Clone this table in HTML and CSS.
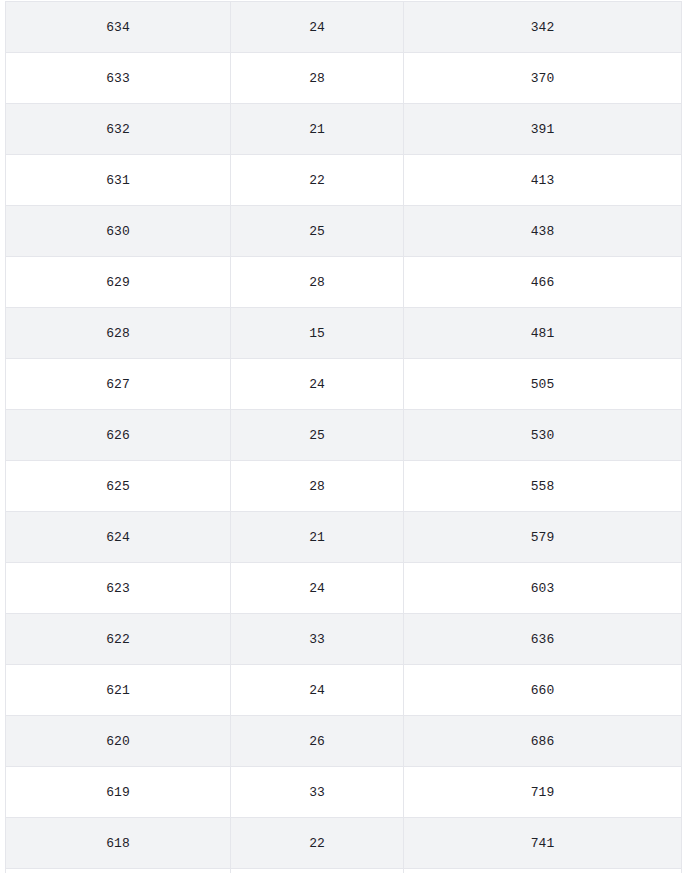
FILE: index.html
```html
<!DOCTYPE html>
<html>
<head>
<meta charset="utf-8">
<link rel="stylesheet" href="styles.css">
</head>
<body>
<div class="wrap">
<table class="data">
<colgroup><col class="c1"><col class="c2"><col class="c3"></colgroup>
<tbody>
<tr><td>634</td><td>24</td><td>342</td></tr>
<tr><td>633</td><td>28</td><td>370</td></tr>
<tr><td>632</td><td>21</td><td>391</td></tr>
<tr><td>631</td><td>22</td><td>413</td></tr>
<tr><td>630</td><td>25</td><td>438</td></tr>
<tr><td>629</td><td>28</td><td>466</td></tr>
<tr><td>628</td><td>15</td><td>481</td></tr>
<tr><td>627</td><td>24</td><td>505</td></tr>
<tr><td>626</td><td>25</td><td>530</td></tr>
<tr><td>625</td><td>28</td><td>558</td></tr>
<tr><td>624</td><td>21</td><td>579</td></tr>
<tr><td>623</td><td>24</td><td>603</td></tr>
<tr><td>622</td><td>33</td><td>636</td></tr>
<tr><td>621</td><td>24</td><td>660</td></tr>
<tr><td>620</td><td>26</td><td>686</td></tr>
<tr><td>619</td><td>33</td><td>719</td></tr>
<tr><td>618</td><td>22</td><td>741</td></tr>
<tr><td></td><td></td><td></td></tr>
</tbody>
</table>
</div>
</body>
</html>
```
FILE: styles.css
```css
html, body {
  margin: 0;
  padding: 0;
  background: #ffffff;
}
.wrap {
  padding: 1px 4px 0 5px;
}
.data {
  width: 676px;
  border-collapse: collapse;
  table-layout: fixed;
  font-family: "Liberation Mono", "DejaVu Sans Mono", monospace;
  font-size: 13px;
  color: #1d2129;
}
.c1 { width: 225px; }
.c2 { width: 173px; }
.c3 { width: 278px; }
.data td {
  height: 49px;
  padding: 1px 0 0;
  border: 1px solid #e5e6eb;
  text-align: center;
  vertical-align: middle;
}
.data tr:nth-child(odd) td {
  background: #f2f3f5;
}
```
